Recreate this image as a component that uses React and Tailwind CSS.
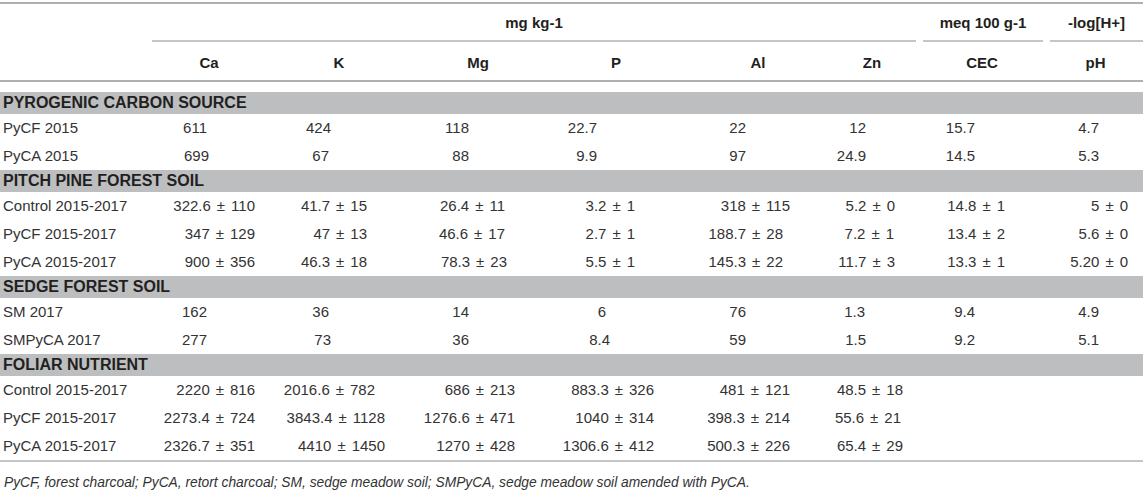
import React from "react";

const GRID =
  "grid grid-cols-[152px_114px_146px_132px_144px_140px_88px_132px_95px]";

const sections = [
  {
    title: "PYROGENIC CARBON SOURCE",
    rows: [
      ["PyCF 2015", [["611", "pr-[59px]"], ["424", "pr-[81px]"], ["118", "pr-[75px]"], ["22.7", "pr-[91px]"], ["22", "pr-[82px]"], ["12", "pr-[50px]"], ["15.7", "pr-[73px]"], ["4.7", "pr-[44px]"]]],
      ["PyCA 2015", [["699", "pr-[57px]"], ["67", "pr-[83px]"], ["88", "pr-[75px]"], ["9.9", "pr-[91px]"], ["97", "pr-[82px]"], ["24.9", "pr-[50px]"], ["14.5", "pr-[73px]"], ["5.3", "pr-[44px]"]]],
    ],
  },
  {
    title: "PITCH PINE FOREST SOIL",
    rows: [
      ["Control 2015-2017", [["322.6 ± 110", "pr-[11px]"], ["41.7 ± 15", "pr-[45px]"], ["26.4 ± 11", "pr-[39px]"], ["3.2 ± 1", "pr-[53px]"], ["318 ± 115", "pr-[38px]"], ["5.2 ± 0", "pr-[21px]"], ["14.8 ± 1", "pr-[43px]"], ["5 ± 0", "pr-[15px]"]]],
      ["PyCF 2015-2017", [["347 ± 129", "pr-[11px]"], ["47 ± 13", "pr-[45px]"], ["46.6 ± 17", "pr-[39px]"], ["2.7 ± 1", "pr-[53px]"], ["188.7 ± 28", "pr-[45px]"], ["7.2 ± 1", "pr-[22px]"], ["13.4 ± 2", "pr-[43px]"], ["5.6 ± 0", "pr-[15px]"]]],
      ["PyCA 2015-2017", [["900 ± 356", "pr-[11px]"], ["46.3 ± 18", "pr-[45px]"], ["78.3 ± 23", "pr-[37px]"], ["5.5 ± 1", "pr-[53px]"], ["145.3 ± 22", "pr-[45px]"], ["11.7 ± 3", "pr-[21px]"], ["13.3 ± 1", "pr-[43px]"], ["5.20 ± 0", "pr-[15px]"]]],
    ],
  },
  {
    title: "SEDGE FOREST SOIL",
    rows: [
      ["SM 2017", [["162", "pr-[59px]"], ["36", "pr-[83px]"], ["14", "pr-[75px]"], ["6", "pr-[82px]"], ["76", "pr-[82px]"], ["1.3", "pr-[51px]"], ["9.4", "pr-[73px]"], ["4.9", "pr-[44px]"]]],
      ["SMPyCA 2017", [["277", "pr-[59px]"], ["73", "pr-[81px]"], ["36", "pr-[75px]"], ["8.4", "pr-[78px]"], ["59", "pr-[82px]"], ["1.5", "pr-[50px]"], ["9.2", "pr-[73px]"], ["5.1", "pr-[44px]"]]],
    ],
  },
  {
    title: "FOLIAR NUTRIENT",
    rows: [
      ["Control 2015-2017", [["2220 ± 816", "pr-[11px]"], ["2016.6 ± 782", "pr-[37px]"], ["686 ± 213", "pr-[29px]"], ["883.3 ± 326", "pr-[34px]"], ["481 ± 121", "pr-[38px]"], ["48.5 ± 18", "pr-[13px]"], ["", ""], ["", ""]]],
      ["PyCF 2015-2017", [["2273.4 ± 724", "pr-[11px]"], ["3843.4 ± 1128", "pr-[27px]"], ["1276.6 ± 471", "pr-[29px]"], ["1040 ± 314", "pr-[34px]"], ["398.3 ± 214", "pr-[38px]"], ["55.6 ± 21", "pr-[15px]"], ["", ""], ["", ""]]],
      ["PyCA 2015-2017", [["2326.7 ± 351", "pr-[11px]"], ["4410 ± 1450", "pr-[27px]"], ["1270 ± 428", "pr-[29px]"], ["1306.6 ± 412", "pr-[34px]"], ["500.3 ± 226", "pr-[38px]"], ["65.4 ± 29", "pr-[13px]"], ["", ""], ["", ""]]],
    ],
  },
];

function Val({ text }) {
  if (!text.includes("±")) return <span>{text}</span>;
  const [a, b] = text.split(" ± ");
  return (
    <span className="whitespace-nowrap">
      {a}
      <span className="mx-[6px]">±</span>
      {b}
    </span>
  );
}

const headers = ["Ca", "K", "Mg", "P", "Al", "Zn", "CEC", "pH"];

export default function App() {
  return (
    <div
      className="w-[1143px] h-[495px] bg-white text-[#333333] pt-[2px] overflow-hidden"
      style={{ fontFamily: '"Liberation Sans", Arial, sans-serif' }}
    >
      <div className="border-t-2 border-[#adafb1]">
        <div className={`${GRID} h-[38px] text-[15px] font-bold text-[#231f20]`}>
          <div />
          <div className="col-span-6 border-b-2 border-[#c4c5c7] flex items-center justify-center pt-[2px]">
            mg kg-1
          </div>
          <div className="ml-[7px] mr-[5px] border-b-2 border-[#c4c5c7] flex items-center justify-center pt-[2px]">
            meq 100 g-1
          </div>
          <div className="ml-[2px] border-b-2 border-[#c4c5c7] flex items-center justify-center pt-[2px]">
            -log[H+]
          </div>
        </div>
        <div className={`${GRID} h-[40px] border-b-2 border-[#adafb1] text-[15px] font-bold text-[#231f20]`}>
          <div />
          {headers.map((h) => (
            <div key={h} className="flex items-center justify-center pt-[4px]">
              {h}
            </div>
          ))}
        </div>
      </div>

      <div className="mt-[10px] text-[15px]">
        {sections.map((s) => (
          <div key={s.title}>
            <div className="h-[22px] bg-[#bcbec0] flex items-center pl-[3px] text-[16px] font-bold text-[#231f20]">
              {s.title}
            </div>
            {s.rows.map(([label, vals]) => (
              <div key={label} className={`${GRID} h-[28px] items-center`}>
                <div className="pl-[3px] whitespace-nowrap">{label}</div>
                {vals.map(([v, pr], i) => (
                  <div key={i} className={`text-right ${pr}`}>
                    <Val text={v} />
                  </div>
                ))}
              </div>
            ))}
          </div>
        ))}
      </div>

      <div className="border-t-2 border-[#c4c5c7] pt-[11px] pl-[4px] text-[13.8px] italic text-[#333333] whitespace-nowrap">
        PyCF, forest charcoal; PyCA, retort charcoal; SM, sedge meadow soil; SMPyCA, sedge meadow soil amended with PyCA.
      </div>
    </div>
  );
}
